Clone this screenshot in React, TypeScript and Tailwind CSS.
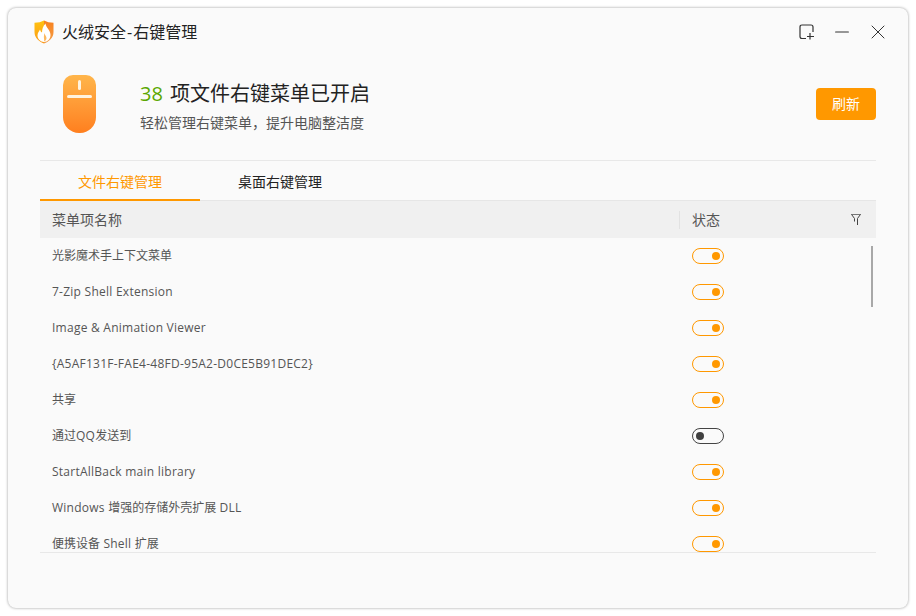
import React from 'react';
import { Minus, X } from 'lucide-react';

const rows = [
  { name: '光影魔术手上下文菜单', on: true },
  { name: '7-Zip Shell Extension', on: true },
  { name: 'Image & Animation Viewer', on: true },
  { name: '{A5AF131F-FAE4-48FD-95A2-D0CE5B91DEC2}', on: true },
  { name: '共享', on: true },
  { name: '通过QQ发送到', on: false },
  { name: 'StartAllBack main library', on: true },
  { name: 'Windows 增强的存储外壳扩展 DLL', on: true },
  { name: '便携设备 Shell 扩展', on: true },
];

// latin runs sit a bit wider than the font gives them, CJK runs don't
const RowName = ({ name }: { name: string }) => (
  <>
    {name.split(/([\x20-\x7e]+)/).map((part, i) =>
      i % 2 === 1 ? (
        <span key={i} className="tracking-[0.25px]">
          {part}
        </span>
      ) : (
        part
      )
    )}
  </>
);

const Logo = () => (
  <svg width="20" height="24" viewBox="0 0 20 24">
    <defs>
      <linearGradient id="shieldLeft" x1="0" y1="0" x2="0" y2="1">
        <stop offset="0" stopColor="#ffc20e" />
        <stop offset="1" stopColor="#fb9a1a" />
      </linearGradient>
      <linearGradient id="shieldRight" x1="0" y1="0" x2="0" y2="1">
        <stop offset="0" stopColor="#f7801c" />
        <stop offset="1" stopColor="#f5a04a" />
      </linearGradient>
    </defs>
    <path d="M0.5 2.8 Q6 2.8 10 0.5 V23.5 C5 21.5 0.5 18 0.5 12 Z" fill="url(#shieldLeft)" />
    <path d="M10 0.5 Q14 2.8 19.5 2.8 V12 C19.5 18 15 21.5 10 23.5 Z" fill="url(#shieldRight)" />
    <path d="M11.5 3.5 C12 8 16.5 10 16.5 15 C16.5 19 13.5 22 10 22 C6.5 22 3.5 19 3.5 15.5 C3.5 13 5 11.5 6 9.5 C6.5 11 7 12 8 12.5 C8 9.5 9 6 11.5 3.5 Z" fill="#fff" />
    <path d="M10.5 13 C10.5 15 12.5 16 12.5 18 C12.5 20 11.4 21.2 10 21.2 C10.8 19.5 9 18 10.5 13 Z" fill="#fbb860" />
  </svg>
);

const Mouse = () => (
  <div className="relative w-[33px] h-[58px] rounded-t-[10px] rounded-b-[16px] bg-gradient-to-b from-[#ffb54a] to-[#ff7f1e]">
    <div className="absolute left-[15px] top-[5px] w-[3px] h-[10px] bg-[#fff3df] rounded-sm" />
    <div className="absolute left-[4px] top-[20px] w-[25px] h-[3px] bg-[#fff3df] rounded-sm" />
  </div>
);

const Toggle = ({ on }: { on: boolean }) => (
  <div
    className={`w-8 h-4 rounded-full border flex items-center px-[3px] ${
      on ? 'border-[#ff9800] justify-end' : 'border-[#444444] justify-start'
    }`}
  >
    <div className={`w-2 h-2 rounded-full ${on ? 'bg-[#ff9800]' : 'bg-[#3f3f3f]'}`} />
  </div>
);

export default function App() {
  return (
    <div
      className="w-[916px] h-[616px] p-2 bg-white overflow-hidden"
      style={{ fontFamily: '"Open Sans", "Noto Sans CJK SC", sans-serif' }}
    >
      <div className="w-[900px] h-[600px] flex flex-col rounded-lg bg-[#fafafa] shadow-[0_0_3px_rgba(0,0,0,0.4)]">
        <div className="h-12 flex items-center pl-[26px] pr-[18px] shrink-0">
          <Logo />
          <span className="ml-2 text-base text-[#222222]">
            火绒安全<span className="mx-px">-</span>右键管理
          </span>
          <div className="ml-auto flex items-center">
            <svg width="16" height="16" viewBox="0 0 16 16" fill="none" stroke="#333333" strokeWidth="1.2">
              <path d="M7 14.5 H3 Q1 14.5 1 12.5 V3 Q1 1 3 1 H12 Q14 1 14 3 V8" />
              <path d="M11 9 V15.5 M8 12.5 H15" />
            </svg>
            <Minus size={22} strokeWidth={1.1} color="#333333" className="ml-4" />
            <X size={24} strokeWidth={1} color="#333333" className="ml-[13px]" />
          </div>
        </div>

        <div className="mx-8 h-[105px] shrink-0 flex items-start border-b border-[#e8e8e8]">
          <div className="ml-[23px] mt-[19px]">
            <Mouse />
          </div>
          <div className="ml-[44px] mt-6">
            <div className="text-xl leading-[28px] text-[#222222]">
              <span className="text-[#5aa700] mr-[2px]">38</span> 项文件右键菜单已开启
            </div>
            <div className="mt-[5px] text-sm leading-5 text-[#555555]">轻松管理右键菜单，提升电脑整洁度</div>
          </div>
          <button className="ml-auto mt-8 w-[60px] h-8 rounded bg-[#ff9800] text-sm text-white">刷新</button>
        </div>

        <div className="mx-8 flex h-10 shrink-0 border-b border-[#e6e6e6]">
          <div className="w-40 h-10 pt-[3px] flex items-center justify-center border-b-2 border-[#ff9800] text-sm text-[#ff9800]">
            文件右键管理
          </div>
          <div className="w-40 pt-[3px] flex items-center justify-center text-sm text-[#222222]">桌面右键管理</div>
        </div>

        <div className="mx-8 h-[37px] shrink-0 flex items-center bg-[#f0f0f0] text-sm text-[#555555]">
          <div className="w-[639px] pl-3">菜单项名称</div>
          <div className="w-px h-[18px] bg-[#e2e2e2]" />
          <div className="pl-3">状态</div>
          <svg className="ml-auto mr-[15px] -mt-px" width="10" height="11" viewBox="0 0 10 11" fill="none">
            <path d="M0 0.5 H10" stroke="#777777" strokeWidth="1" />
            <path d="M0.8 0.8 L3.5 4.5 V7.5 M9.2 0.8 L6.5 4.5 V11" stroke="#444444" strokeWidth="1" />
          </svg>
        </div>

        <div className="relative mx-8 h-[315px] shrink-0 overflow-hidden border-b border-[#e8e8e8]">
          {rows.map((row) => (
            <div key={row.name} className="h-9 flex items-center text-xs text-[#555555]">
              <div className="w-[652px] pl-3">
                <RowName name={row.name} />
              </div>
              <Toggle on={row.on} />
            </div>
          ))}
          <div className="absolute right-[3px] top-[8px] w-[2px] h-[61px] bg-[#a8a8a8]" />
        </div>
      </div>
    </div>
  );
}
